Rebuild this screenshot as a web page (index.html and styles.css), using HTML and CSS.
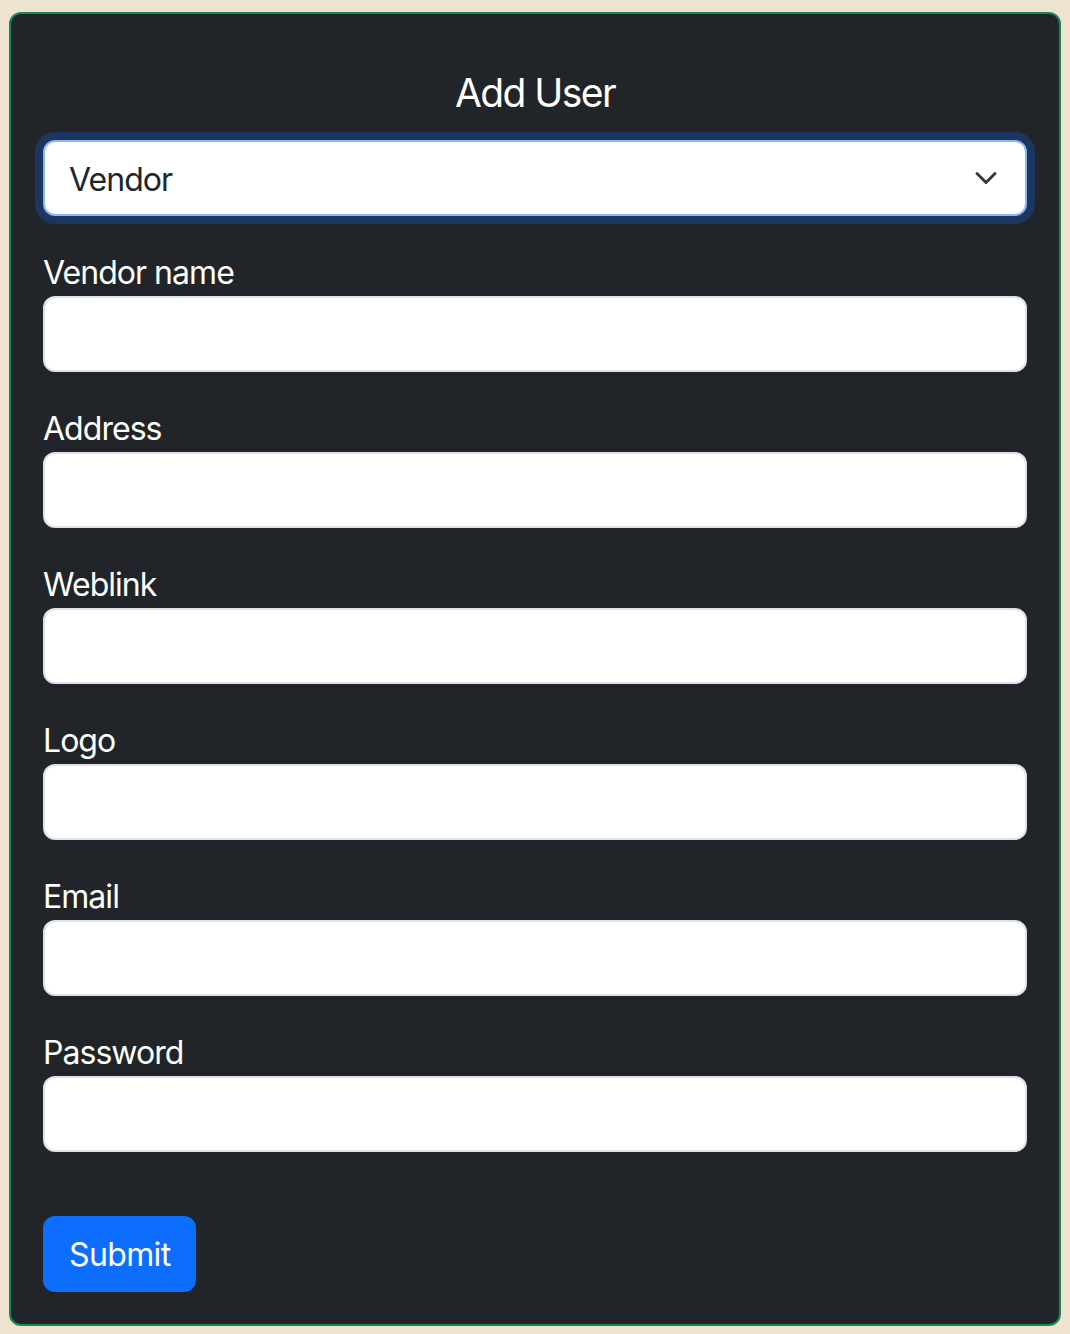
FILE: index.html
```html
<!DOCTYPE html>
<html lang="en">
<head>
<meta charset="utf-8">
<title>Add User</title>
<link rel="stylesheet" href="styles.css">
</head>
<body>
<div class="card">
  <h2 class="title">Add User</h2>
  <form class="form">
    <div class="select-wrap">
      <select class="select">
        <option>Vendor</option>
        <option>Customer</option>
      </select>
      <svg class="chevron" width="32" height="24" viewBox="0 0 16 16" aria-hidden="true">
        <path d="m2 5 6 6 6-6" fill="none" stroke="#343a40" stroke-width="2" stroke-linecap="round" stroke-linejoin="round"/>
      </svg>
    </div>
    <div class="group">
      <label class="label">Vendor name</label>
      <input class="input" type="text">
    </div>
    <div class="group">
      <label class="label">Address</label>
      <input class="input" type="text">
    </div>
    <div class="group">
      <label class="label">Weblink</label>
      <input class="input" type="text">
    </div>
    <div class="group">
      <label class="label">Logo</label>
      <input class="input" type="text">
    </div>
    <div class="group">
      <label class="label">Email</label>
      <input class="input" type="email">
    </div>
    <div class="group">
      <label class="label">Password</label>
      <input class="input" type="password">
    </div>
    <div class="actions">
      <button class="btn" type="button">Submit</button>
    </div>
  </form>
</div>
</body>
</html>
```

FILE: styles.css
```css
* { box-sizing: border-box; }
html, body { height: 100%; }
body {
  margin: 0;
  padding: 12px 9px 8px 9px;
  background: #ede3d0;
  font-family: "Inter", "Roboto", "Liberation Sans", sans-serif;
}
.card {
  background: #212529;
  border: 2px solid #198754;
  border-radius: 12px;
  padding: 54px 32px 32px 32px;
  height: 1314px;
}
.title {
  margin: 0;
  padding-top: 2px;
  height: 48px;
  font-size: 39px;
  line-height: 46px;
  font-weight: 400;
  letter-spacing: -0.04em;
  color: #ffffff;
  text-align: center;
}
.form {
  display: flex;
  flex-direction: column;
  margin-top: 24px;
}
.select-wrap {
  position: relative;
  margin-bottom: 32px;
}
.select {
  -webkit-appearance: none;
  appearance: none;
  display: block;
  width: 100%;
  height: 76px;
  padding: 2px 72px 0 24px;
  font-family: inherit;
  font-size: 32px;
  letter-spacing: -0.03em;
  color: #212529;
  background: #ffffff;
  border: 2px solid #86b7fe;
  border-radius: 12px;
  box-shadow: 0 0 0 8px rgba(13, 110, 253, 0.25);
  outline: none;
}
.chevron {
  position: absolute;
  right: 25px;
  top: 26px;
  pointer-events: none;
}
.group {
  display: flex;
  flex-direction: column;
  margin-bottom: 32px;
}
.label {
  height: 48px;
  padding-top: 2px;
  font-size: 32px;
  line-height: 46px;
  letter-spacing: -0.03em;
  color: #ffffff;
}
.input {
  display: block;
  width: 100%;
  height: 76px;
  padding: 0 24px;
  font-family: inherit;
  font-size: 32px;
  color: #212529;
  background: #ffffff;
  border: 2px solid #dee2e6;
  border-radius: 12px;
  outline: none;
}
.actions {
  padding-top: 32px;
}
.btn {
  height: 76px;
  padding: 2px 24px 0 24px;
  font-family: inherit;
  font-size: 32px;
  line-height: 46px;
  letter-spacing: -0.02em;
  color: #ffffff;
  background: #0d6efd;
  border: 2px solid #0d6efd;
  border-radius: 12px;
  cursor: pointer;
}
```
